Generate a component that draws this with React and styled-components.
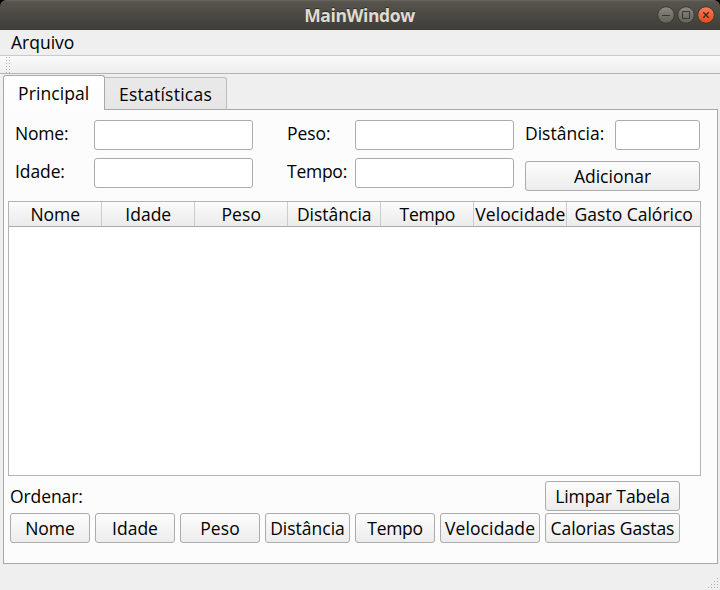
import React from 'react';
import styled, { createGlobalStyle } from 'styled-components';

const Global = createGlobalStyle`
  * { box-sizing: border-box; }
  body { margin: 0; background: #000; }
`;

const Window = styled.div`
  width: 720px;
  height: 590px;
  display: flex;
  flex-direction: column;
  overflow: hidden;
  background: #efefef;
  color: #000;
  font-family: "Open Sans", "Noto Sans", sans-serif;
  font-size: 17.5px;
  line-height: 24px;
  white-space: nowrap;
`;

const TitleFrame = styled.div`
  height: 30px;
  background: #000;
`;

const TitleBar = styled.header`
  height: 30px;
  display: grid;
  grid-template-columns: 1fr auto 1fr;
  align-items: center;
  padding-right: 5px;
  padding-left: 5px;
  border-radius: 7px 7px 0 0;
  background: linear-gradient(#5b5850 0, #5b5850 1px, #57544d 2px, #3f3e39 29px, #393833 30px);
  box-shadow: inset 0 1px 0 #65625a;
`;

const Title = styled.h1`
  grid-column: 2;
  margin: 0 1px 0 0;
  padding-bottom: 1px;
  font-size: 17.5px;
  font-weight: 700;
  letter-spacing: -0.4px;
  color: #dfdbd2;
  text-shadow: 0 -1px 0 #2d2c28;
`;

const WindowControls = styled.div`
  display: flex;
  justify-content: flex-end;
  gap: 2px;
`;

const ControlIcon = styled.svg`
  width: 18px;
  height: 18px;
  display: block;
`;

const MenuBar = styled.nav`
  height: 26px;
  padding: 0 11px;
  border-bottom: 1px solid #cacaca;
`;

const MenuItem = styled.span`
  display: block;
  line-height: 25px;
`;

const ToolBar = styled.div`
  height: 18px;
  padding-left: 6px;
  border-bottom: 1px solid #b4b4b4;
  background: linear-gradient(#fafafa, #eeeeee);
`;

const GripIcon = styled.svg`
  width: 5px;
  height: 17px;
  display: block;
`;

const TabArea = styled.main`
  height: 490px;
  margin: 1px 2px 0 3px;
  display: flex;
  flex-direction: column;
`;

const TabRow = styled.div`
  height: 35px;
  margin-bottom: -1px;
  display: flex;
  align-items: flex-end;
  z-index: 1;
`;

const Tab = styled.div`
  width: ${(p) => (p.$active ? 102 : 122)}px;
  height: ${(p) => (p.$active ? 35 : 33)}px;
  line-height: ${(p) => (p.$active ? 35 : 33)}px;
  padding-left: 14px;
  letter-spacing: ${(p) => (p.$active ? 0.1 : 0.24)}px;
  border: 1px solid ${(p) => (p.$active ? '#a8a8a8' : '#bcbcbc')};
  border-left-width: ${(p) => (p.$active ? 1 : 0)}px;
  border-bottom: ${(p) => (p.$active ? '0' : '1px solid #a8a8a8')};
  border-radius: ${(p) => (p.$active ? '3px 3px 0 0' : '0 3px 0 0')};
  background: ${(p) => (p.$active ? 'linear-gradient(#ffffff, #fcfcfc)' : 'linear-gradient(#e9e9e9, #e6e6e6)')};
`;

const Panel = styled.section`
  height: 455px;
  padding: 10px 16px 0 4px;
  display: flex;
  flex-direction: column;
  border: 1px solid #a8a8a8;
  background: #fcfcfc;
`;

const Form = styled.form`
  height: 81px;
  display: flex;
  padding-left: 7px;
`;

const FieldColumn = styled.div`
  display: flex;
  flex-direction: column;
  gap: 8px;
  margin-right: ${(p) => p.$after}px;
`;

const Field = styled.label`
  height: 30px;
  display: grid;
  grid-template-columns: ${(p) => p.$label}px ${(p) => p.$input}px;
`;

const Caption = styled.span`
  line-height: 27px;
  letter-spacing: ${(p) => p.$tracking || 0}px;
`;

const Input = styled.input`
  width: 100%;
  height: 30px;
  padding: 0 5px;
  font: inherit;
  border: 1px solid #ababab;
  border-radius: 3px;
  outline: none;
  background: #fff;
`;

const Button = styled.button`
  width: ${(p) => p.$width}px;
  height: 30px;
  padding: 0;
  display: flex;
  justify-content: center;
  align-items: center;
  flex-shrink: 0;
  font: inherit;
  line-height: 28px;
  letter-spacing: ${(p) => p.$tracking || 0}px;
  color: inherit;
  border: 1px solid #ababab;
  border-radius: 3px;
  background: linear-gradient(#fdfdfd, #ececec);
`;

const AddButton = styled(Button)`
  margin-top: 3px;
`;

const Table = styled.div`
  width: 693px;
  height: 275px;
  border: 1px solid #b4b4b4;
  background: #fff;
`;

const TableHead = styled.div`
  height: 25px;
  display: grid;
  grid-template-columns: repeat(6, 93px) 133px;
  border-bottom: 1px solid #ababab;
  background: linear-gradient(#fbfbfb, #ebebeb);
`;

const HeadCell = styled.div`
  height: 24px;
  padding-left: 0.5px;
  display: flex;
  justify-content: center;
  line-height: 25px;
  letter-spacing: ${(p) => p.$tracking || 0}px;
  border-right: 1px solid #cccccc;

  &:last-child { border-right: 0; }
`;

const SortHeader = styled.div`
  width: 670px;
  height: 32px;
  margin: 5px 0 0 2px;
  display: flex;
  justify-content: space-between;
`;

const SortCaption = styled.span`
  line-height: 31px;
  letter-spacing: -0.1px;
`;

const SortRow = styled.div`
  margin-left: 2px;
  display: flex;
  gap: 5px;
`;

const StatusBar = styled.footer`
  height: 25px;
  display: flex;
  justify-content: flex-end;
  align-items: flex-end;
`;

const SizeGrip = styled.svg`
  width: 13px;
  height: 13px;
  display: block;
`;

const columns = [
  ['Nome'],
  ['Idade'],
  ['Peso', 0.1],
  ['Distância'],
  ['Tempo', -0.3],
  ['Velocidade', 0.12],
  ['Gasto Calórico'],
];

const sorts = [
  ['Nome', 80],
  ['Idade', 80],
  ['Peso', 80, 0.1],
  ['Distância', 85],
  ['Tempo', 80, -0.3],
  ['Velocidade', 100, 0.12],
  ['Calorias Gastas', 135, -0.08],
];

const gripDots = [[10, 1], [7, 4], [10, 4], [4, 7], [7, 7], [10, 7], [1, 10], [4, 10], [7, 10], [10, 10]];

function Control({ close, children }) {
  const id = close ? 'control-close' : 'control-plain';
  return (
    <ControlIcon viewBox="0 0 18 18">
      <defs>
        <linearGradient id={id} x1="0" y1="0" x2="0" y2="1">
          <stop offset="0" stopColor={close ? '#f58060' : '#8c8a82'} />
          <stop offset="0.5" stopColor={close ? '#ec6237' : '#75736c'} />
          <stop offset="1" stopColor={close ? '#de4d1c' : '#64625b'} />
        </linearGradient>
      </defs>
      <circle cx="9" cy="9" r="8.3" fill={`url(#${id})`} stroke="#383732" strokeWidth="1" />
      <g fill="none" stroke={close ? '#42291e' : '#393833'}>{children}</g>
    </ControlIcon>
  );
}

export default function App() {
  return (
    <Window>
      <Global />
      <TitleFrame>
        <TitleBar>
          <Title>MainWindow</Title>
          <WindowControls>
            <Control><path d="M5 9.5h8" /></Control>
            <Control><path d="M5.5 5.5h7v7h-7z" /></Control>
            <Control close><path d="M6.3 6.3l5.4 5.4M11.7 6.3l-5.4 5.4" strokeWidth="1.3" /></Control>
          </WindowControls>
        </TitleBar>
      </TitleFrame>
      <MenuBar><MenuItem>Arquivo</MenuItem></MenuBar>
      <ToolBar>
        <GripIcon viewBox="0 0 5 17" shapeRendering="crispEdges">
          {[1, 4, 7, 10, 13, 16].map((y) => (
            <path key={y} d={`M0 ${y}h1v1h-1zM3 ${y}h1v1h-1z`} fill="#b4b4b4" />
          ))}
        </GripIcon>
      </ToolBar>
      <TabArea>
        <TabRow>
          <Tab $active>Principal</Tab>
          <Tab>Estatísticas</Tab>
        </TabRow>
        <Panel>
          <Form>
            <FieldColumn $after={34}>
              <Field $label={79} $input={159}><Caption $tracking={-0.18}>Nome:</Caption><Input /></Field>
              <Field $label={79} $input={159}><Caption $tracking={-0.1}>Idade:</Caption><Input /></Field>
            </FieldColumn>
            <FieldColumn $after={11}>
              <Field $label={68} $input={159}><Caption $tracking={-0.06}>Peso:</Caption><Input /></Field>
              <Field $label={68} $input={159}><Caption $tracking={-0.25}>Tempo:</Caption><Input /></Field>
            </FieldColumn>
            <FieldColumn $after={0}>
              <Field $label={90} $input={85}><Caption>Distância:</Caption><Input /></Field>
              <AddButton type="button" $width={175}>Adicionar</AddButton>
            </FieldColumn>
          </Form>
          <Table>
            <TableHead>
              {columns.map(([name, tracking]) => (
                <HeadCell key={name} $tracking={tracking}>{name}</HeadCell>
              ))}
            </TableHead>
          </Table>
          <SortHeader>
            <SortCaption>Ordenar:</SortCaption>
            <Button $width={135} $tracking={-0.1}>Limpar Tabela</Button>
          </SortHeader>
          <SortRow>
            {sorts.map(([name, width, tracking]) => (
              <Button key={name} $width={width} $tracking={tracking}>{name}</Button>
            ))}
          </SortRow>
        </Panel>
      </TabArea>
      <StatusBar>
        <SizeGrip viewBox="0 0 13 13" shapeRendering="crispEdges">
          {gripDots.map(([x, y]) => (
            <rect key={`${x}-${y}`} x={x} y={y} width="1" height="1" fill="#b0b0b0" />
          ))}
        </SizeGrip>
      </StatusBar>
    </Window>
  );
}
